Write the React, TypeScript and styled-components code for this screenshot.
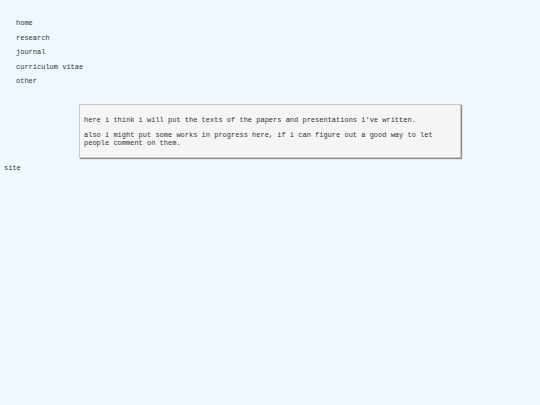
import React from 'react'
import styled, { createGlobalStyle } from 'styled-components'

const GlobalStyle = createGlobalStyle`
  html, body {
    margin: 0;
    padding: 0;
    background: #f0f8ff;
  }
  body {
    font-family: "Liberation Mono", "Courier New", monospace;
    font-size: 7px;
    color: #333;
  }
`

const Page = styled.div`
  min-height: 405px;
`

const Nav = styled.ul`
  list-style: none;
  margin: 0;
  padding: 16px 0 0 16px;
`

const NavItem = styled.li`
  line-height: 14.5px;
  color: #333;
`

const Content = styled.div`
  margin: 15.5px 0 0 79px;
  width: 372px;
  padding: 3.5px 4px 3px;
  background: #f5f5f5;
  border: 1px solid #c8c8c8;
  box-shadow: 1px 1px 1px #8a8a8a;
`

const Para = styled.p`
  margin: 7px 0;
  line-height: 8px;
`

const Footer = styled.div`
  margin-top: 6px;
  padding-left: 4px;
  line-height: 8px;
`

const links = ['home', 'research', 'journal', 'curriculum vitae', 'other']

const App: React.FC = () => {
  return (
    <Page>
      <GlobalStyle />
      <Nav>
        {links.map((l) => (
          <NavItem key={l}>{l}</NavItem>
        ))}
      </Nav>
      <Content>
        <Para>here i think i will put the texts of the papers and presentations i've written.</Para>
        <Para>
          also i might put some works in progress here, if i can figure out a good way to let people comment on them.
        </Para>
      </Content>
      <Footer>site</Footer>
    </Page>
  )
}

export default App
